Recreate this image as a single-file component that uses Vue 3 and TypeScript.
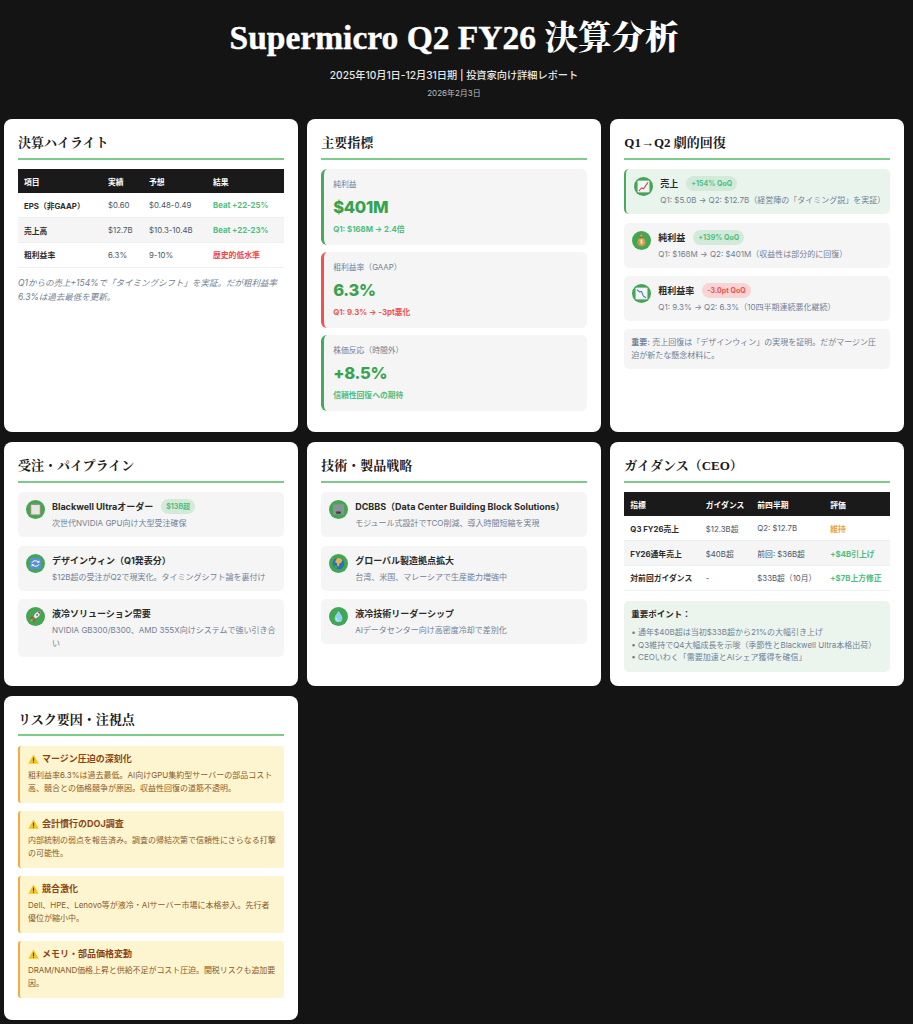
<script setup lang="ts">
type Shape = { tag: string; attrs: Record<string, string | number> }
const s = (tag: string, attrs: Record<string, string | number>): Shape => ({ tag, attrs })

const icons: Record<string, Shape[]> = {
  up: [
    s('rect', { x: 1, y: 1, width: 18, height: 18, rx: 1, fill: '#f3f4f6', stroke: '#c9ced4', 'stroke-width': 0.6 }),
    s('path', { d: 'M3 17 L7 12 L10 13.500 L17 3.500', fill: 'none', stroke: '#d8383f', 'stroke-width': 1.6 }),
  ],
  bag: [
    s('path', { d: 'M7.500 1 h5 l-1.500 4 c4 1.500 5.500 5.500 5.500 8 0 4-3.500 6-6.500 6 s-6.500-2-6.500-6 c0-2.500 1.500-6.500 5.500-8z', fill: '#c99a4f' }),
    s('rect', { x: 7.500, y: 4.500, width: 5, height: 1.200, fill: '#7b5a2a' }),
    s('path', { d: 'M12.500 10 c-1-1-5-1-5 .5 s5 1 5 2.500-4 1.500-5 .5 M10 8 v8', fill: 'none', stroke: '#fff3d0', 'stroke-width': 1 }),
  ],
  down: [
    s('rect', { x: 1, y: 1, width: 18, height: 18, rx: 1, fill: '#f3f4f6', stroke: '#c9ced4', 'stroke-width': 0.6 }),
    s('path', { d: 'M3 4 L7 7.500 L10 7 L13 14 L17 16.500', fill: 'none', stroke: '#3f74c4', 'stroke-width': 1.6 }),
  ],
  clipboard: [
    s('rect', { x: 2, y: 1.500, width: 16, height: 17.500, rx: 1, fill: '#a98f72' }),
    s('rect', { x: 3.500, y: 3, width: 13, height: 14.500, fill: '#e6e6e4' }),
    s('rect', { x: 6.500, y: .5, width: 7, height: 2.500, fill: '#8d8d8d' }),
  ],
  sync: [
    s('rect', { x: 1, y: 1, width: 18, height: 18, rx: 3, fill: '#5b8fd0' }),
    s('path', { d: 'M4.500 9 a5.500 4.500 0 0 1 10-1 M15.500 11 a5.500 4.500 0 0 1-10 1', fill: 'none', stroke: '#fff', 'stroke-width': 1.500 }),
    s('path', { d: 'M16 5 v4 h-4z M4 15 v-4 h4z', fill: '#fff' }),
  ],
  rocket: [
    s('path', { d: 'M18 2 c-6 0-9 3-11 8 l3 3 c5-2 8-5 8-11z', fill: '#e8e8ea' }),
    s('path', { d: 'M18 2 c-2 0-3.500 .5-5 1 l4 4 c.5-1.500 1-3 1-5z', fill: '#d8383f' }),
    s('path', { d: 'M7 10 l-3.500 .5 -2.500 3 4.500-.5z M10 13 l-.5 3.500 -3 2.500 .5-4.500z', fill: '#d8383f' }),
    s('path', { d: 'M4.500 14 l1.500 1.500 -4.500 3z', fill: '#f2b32c' }),
    s('circle', { cx: 12.500, cy: 7.500, r: 1.500, fill: '#3f74c4' }),
  ],
  server: [
    s('rect', { x: 1.500, y: 2, width: 17, height: 16, rx: 1, fill: '#8c9097' }),
    s('rect', { x: 6.500, y: 13, width: 7, height: 3.500, fill: '#3b3e44' }),
  ],
  globe: [
    s('circle', { cx: 10, cy: 10, r: 9, fill: '#2a6fc0' }),
    s('path', { d: 'M8 2 c3-1 7 0 8 3.500 l-2 3.500 -2.500 1 -1 4.500 -2.500-1 0-3.500 -3-2 1-3.500z', fill: '#e0b64a' }),
    s('path', { d: 'M3 13 l4 1 1 4 c-2.500-.5-4-2.500-5-5z', fill: '#5aa650' }),
  ],
  drop: [
    s('path', { d: 'M10 1 c2 4.500 6 7.500 6 11.500 a6 6 0 0 1-12 0 c0-4 4-7 6-11.500z', fill: '#8fd0f2' }),
    s('path', { d: 'M6.500 12.500 c0 2.500 1.500 4 3.500 4', fill: 'none', stroke: '#e4f5fd', 'stroke-width': 1.300 }),
  ],
}

type Row = { cells: string[]; tone: string }
const highlights: Row[] = [
  { cells: ['EPS（非GAAP）', '$0.60', '$0.48-0.49', 'Beat +22-25%'], tone: 'pos' },
  { cells: ['売上高', '$12.7B', '$10.3-10.4B', 'Beat +22-23%'], tone: 'pos' },
  { cells: ['粗利益率', '6.3%', '9-10%', '歴史的低水準'], tone: 'neg' },
]
const guidance: Row[] = [
  { cells: ['Q3 FY26売上', '$12.3B超', 'Q2: $12.7B', '維持'], tone: 'warn' },
  { cells: ['FY26通年売上', '$40B超', '前回: $36B超', '+$4B引上げ'], tone: 'pos' },
  { cells: ['対前回ガイダンス', '-', '$33B超（10月）', '+$7B上方修正'], tone: 'pos' },
]
const metrics = [
  { label: '純利益', value: '$401M', sub: 'Q1: $168M → 2.4倍', tone: 'pos' },
  { label: '粗利益率（GAAP）', value: '6.3%', sub: 'Q1: 9.3% → -3pt悪化', tone: 'neg' },
  { label: '株価反応（時間外）', value: '+8.5%', sub: '信頼性回復への期待', tone: 'pos' },
]
type Item = { icon: string; title: string; desc: string; badge?: string; tone?: string; lead?: boolean }
const recovery: Item[] = [
  { icon: 'up', title: '売上', badge: '+154% QoQ', tone: 'pos', desc: 'Q1: $5.0B → Q2: $12.7B（経営陣の「タイミング説」を実証）', lead: true },
  { icon: 'bag', title: '純利益', badge: '+139% QoQ', tone: 'pos', desc: 'Q1: $168M → Q2: $401M（収益性は部分的に回復）' },
  { icon: 'down', title: '粗利益率', badge: '-3.0pt QoQ', tone: 'neg', desc: 'Q1: 9.3% → Q2: 6.3%（10四半期連続悪化継続）' },
]
const pipeline: Item[] = [
  { icon: 'clipboard', title: 'Blackwell Ultraオーダー', badge: '$13B超', tone: 'pos', desc: '次世代NVIDIA GPU向け大型受注確保' },
  { icon: 'sync', title: 'デザインウィン（Q1発表分）', desc: '$12B超の受注がQ2で現実化。タイミングシフト論を裏付け' },
  { icon: 'rocket', title: '液冷ソリューション需要', desc: 'NVIDIA GB300/B300、AMD 355X向けシステムで強い引き合い' },
]
const tech: Item[] = [
  { icon: 'server', title: 'DCBBS（Data Center Building Block Solutions）', desc: 'モジュール式設計でTCO削減、導入時間短縮を実現' },
  { icon: 'globe', title: 'グローバル製造拠点拡大', desc: '台湾、米国、マレーシアで生産能力増強中' },
  { icon: 'drop', title: '液冷技術リーダーシップ', desc: 'AIデータセンター向け高密度冷却で差別化' },
]
const points = [
  '通年$40B超は当初$33B超から21%の大幅引き上げ',
  'Q3維持でQ4大幅成長を示唆（季節性とBlackwell Ultra本格出荷）',
  'CEOいわく「需要加速とAIシェア獲得を確信」',
]
const risks = [
  { title: 'マージン圧迫の深刻化', text: '粗利益率6.3%は過去最低。AI向けGPU集約型サーバーの部品コスト高、競合との価格競争が原因。収益性回復の道筋不透明。', tight: false },
  { title: '会計慣行のDOJ調査', text: '内部統制の弱点を報告済み。調査の帰結次第で信頼性にさらなる打撃の可能性。', tight: false },
  { title: '競合激化', text: 'Dell、HPE、Lenovo等が液冷・AIサーバー市場に本格参入。先行者優位が縮小中。', tight: false },
  { title: 'メモリ・部品価格変動', text: 'DRAM/NAND価格上昇と供給不足がコスト圧迫。関税リスクも追加要因。', tight: true },
]
</script>

<template>
  <div class="page">
    <header class="head">
      <h1><span class="latin">Supermicro Q2 FY26</span> 決算分析</h1>
      <p class="sub">2025年10月1日-12月31日期 | 投資家向け詳細レポート</p>
      <p class="date">2026年2月3日</p>
    </header>

    <main class="grid">
      <section class="card">
        <h2>決算ハイライト</h2>
        <table class="tbl hl">
          <thead><tr><th>項目</th><th>実績</th><th>予想</th><th>結果</th></tr></thead>
          <tbody>
            <tr v-for="r in highlights" :key="r.cells[0]">
              <td v-for="(c, i) in r.cells" :key="i" :class="i === 3 ? r.tone : ''">{{ c }}</td>
            </tr>
          </tbody>
        </table>
        <p class="foot">Q1からの売上+154%で「タイミングシフト」を実証。だが粗利益率6.3%は過去最低を更新。</p>
      </section>

      <section class="card">
        <h2>主要指標</h2>
        <div v-for="m in metrics" :key="m.label" class="metric" :class="m.tone">
          <div class="m-label">{{ m.label }}</div>
          <div class="m-value">{{ m.value }}</div>
          <div class="m-sub">{{ m.sub }}</div>
        </div>
      </section>

      <section class="card">
        <h2>Q1→Q2 劇的回復</h2>
        <div v-for="it in recovery" :key="it.title" class="item" :class="{ lead: it.lead }">
          <span class="ico"><svg viewBox="0 0 20 20" width="13" height="13"><component :is="p.tag" v-for="(p, i) in icons[it.icon]" :key="i" v-bind="p.attrs" /></svg></span>
          <div class="body">
            <div class="i-title">{{ it.title }}<span v-if="it.badge" class="badge" :class="it.tone">{{ it.badge }}</span></div>
            <div class="i-desc">{{ it.desc }}</div>
          </div>
        </div>
        <p class="note"><b>重要:</b> 売上回復は「デザインウィン」の実現を証明。だがマージン圧迫が新たな懸念材料に。</p>
      </section>

      <section class="card">
        <h2>受注・パイプライン</h2>
        <div v-for="it in pipeline" :key="it.title" class="item">
          <span class="ico"><svg viewBox="0 0 20 20" width="13" height="13"><component :is="p.tag" v-for="(p, i) in icons[it.icon]" :key="i" v-bind="p.attrs" /></svg></span>
          <div class="body">
            <div class="i-title">{{ it.title }}<span v-if="it.badge" class="badge" :class="it.tone">{{ it.badge }}</span></div>
            <div class="i-desc">{{ it.desc }}</div>
          </div>
        </div>
      </section>

      <section class="card">
        <h2>技術・製品戦略</h2>
        <div v-for="it in tech" :key="it.title" class="item">
          <span class="ico"><svg viewBox="0 0 20 20" width="13" height="13"><component :is="p.tag" v-for="(p, i) in icons[it.icon]" :key="i" v-bind="p.attrs" /></svg></span>
          <div class="body">
            <div class="i-title">{{ it.title }}</div>
            <div class="i-desc">{{ it.desc }}</div>
          </div>
        </div>
      </section>

      <section class="card">
        <h2>ガイダンス（CEO）</h2>
        <table class="tbl gd">
          <thead><tr><th>指標</th><th>ガイダンス</th><th>前四半期</th><th>評価</th></tr></thead>
          <tbody>
            <tr v-for="r in guidance" :key="r.cells[0]">
              <td v-for="(c, i) in r.cells" :key="i" :class="i === 3 ? r.tone : ''">{{ c }}</td>
            </tr>
          </tbody>
        </table>
        <div class="points">
          <div class="p-title">重要ポイント：</div>
          <ul><li v-for="p in points" :key="p">{{ p }}</li></ul>
        </div>
      </section>

      <section class="card">
        <h2>リスク要因・注視点</h2>
        <div v-for="r in risks" :key="r.title" class="risk">
          <div class="r-title">
            <svg viewBox="0 0 20 18" width="11" height="10"><path d="M10 1 L19.500 17.500 H.5z" fill="#f5c518" /><rect x="9" y="6.500" width="2" height="6" fill="#3a3a3a" /><rect x="9" y="13.800" width="2" height="2" fill="#3a3a3a" /></svg>
            {{ r.title }}
          </div>
          <p class="r-text" :class="{ tight: r.tight }">{{ r.text }}</p>
        </div>
      </section>
    </main>
  </div>
</template>

<style>
html, body { margin: 0; background: #141414; }
</style>

<style scoped>
.page {
  min-height: 100vh;
  box-sizing: border-box;
  padding: 0 9px 5px 4px;
  background: #141414;
  font-family: Inter, "Noto Sans CJK JP", sans-serif;
  color: #2d3748;
}
.head { text-align: center; padding-top: 16px; height: 119.300px; box-sizing: border-box; color: #fff; }
.head h1 {
  margin: 0;
  font: 900 33.500px/44px "Liberation Serif", "Noto Serif CJK JP", "Noto Sans CJK JP", serif;
}
.latin { -webkit-text-stroke: 0.4px #fff; }
.sub { margin: 8px 0 0; font-size: 10.200px; line-height: 14px; font-weight: 500; color: #e6e6e6; }
.date { margin: 5px 0 0; font-size: 8px; line-height: 12px; color: #bdbdbd; }

.grid { display: grid; grid-template-columns: repeat(3, 1fr); column-gap: 9.500px; row-gap: 10px; align-items: stretch; }
.card { background: #fff; border-radius: 8px; padding: 14px; min-width: 0; }
h2 {
  margin: 0 0 9.500px;
  padding-bottom: 4.500px;
  border-bottom: 2px solid #7dcb8b;
  font: 700 13px/20px "Liberation Serif", "Noto Serif CJK JP", "Noto Sans CJK JP", serif;
  color: #1a1a1a;
}

.tbl { width: 100%; border-collapse: collapse; table-layout: fixed; font-size: 7.800px; }
.tbl th { box-sizing: border-box; background: #1a1a1a; color: #fff; font-weight: 700; text-align: left; padding: 0 6px; height: 24px; }
.tbl td { box-sizing: border-box; padding: 0 6px; height: 24.600px; border-bottom: 1px solid #edf0f2; color: #4a5568; white-space: nowrap; }
.tbl td:first-child { font-weight: 700; color: #2d2d2d; }
.tbl tbody tr:nth-child(even) td { background: #f5f5f5; }
.tbl td.pos { color: #4fbe7e; font-weight: 700; }
.tbl td.neg { color: #ef4444; font-weight: 700; }
.tbl td.warn { color: #f0a030; font-weight: 700; }
.hl th:nth-child(1) { width: 84px; }
.hl th:nth-child(2) { width: 41px; }
.hl th:nth-child(3) { width: 64px; }
.gd th:nth-child(1) { width: 75.500px; }
.gd th:nth-child(2) { width: 51.500px; }
.gd th:nth-child(3) { width: 73px; }
.foot { margin: 8.500px 0 0; font-size: 8.500px; line-height: 14px; font-style: italic; color: #718096; }

.metric { background: #f5f5f5; border-left: 3px solid #48a95a; border-radius: 6px; padding: 9px; margin-bottom: 7px; height: 76px; box-sizing: border-box; }
.metric.neg { border-left-color: #ef5350; }
.m-label { font-size: 7.800px; line-height: 12px; color: #718096; }
.m-value { font-size: 16.500px; line-height: 22px; font-weight: 800; color: #38a34f; margin-top: 6px; letter-spacing: -0.3px; }
.m-sub { font-size: 7.800px; line-height: 12px; font-weight: 700; color: #4fbe7e; margin-top: 5px; }
.metric.neg .m-sub { color: #ef5350; }

.item { display: flex; gap: 7.500px; background: #f5f5f5; border-radius: 5px; padding: 7px 7px 7px 7.500px; margin-bottom: 8.300px; }
.item.lead { background: #e9f5ec; border-left: 2px solid #48a95a; }
.ico { flex: none; width: 19px; height: 19px; border-radius: 50%; background: #43a653; display: flex; align-items: center; justify-content: center; margin-top: 1px; }
.body { min-width: 0; flex: 1; }
.i-title { font-size: 9px; line-height: 15px; font-weight: 700; color: #2a2a2a; display: flex; align-items: center; white-space: nowrap; }
.i-desc { font-size: 8px; line-height: 13px; color: #718096; margin-top: 3px; }
.badge { margin-left: 8px; padding: 0 5px; height: 15px; line-height: 15px; border-radius: 8px; font-size: 7px; font-weight: 700; }
.badge.pos { background: #d3eadb; color: #4fbe7e; }
.badge.neg { background: #f7d5d5; color: #ef5350; }
.note { margin: 2.500px 0 0; background: #f5f5f5; border-radius: 5px; padding: 7px; font-size: 8px; line-height: 13px; color: #718096; }
.note b { font-weight: 700; }

.points { margin-top: 10px; background: #ebf5ee; border-radius: 5px; padding: 7px 7px 8px; }
.p-title { font-size: 8.500px; line-height: 13px; font-weight: 700; color: #2a2a2a; }
ul { list-style: none; margin: 5.500px 0 0; padding: 0; }
li { font-size: 8px; line-height: 12.500px; color: #718096; }
li::before { content: "• "; }

.risk { background: #fdf5cf; border-left: 2px solid #f6a94a; border-radius: 3px; padding: 6.500px 7px 6.500px 8px; margin-bottom: 7.500px; height: 57.500px; box-sizing: border-box; }
.r-title { font-size: 9px; line-height: 14px; font-weight: 700; color: #8b4513; display: flex; align-items: center; gap: 3px; }
.r-text { margin: 3px 0 0; font-size: 8px; line-height: 13px; color: #8b5a2b; }
.r-text.tight { letter-spacing: -0.08px; }
</style>
